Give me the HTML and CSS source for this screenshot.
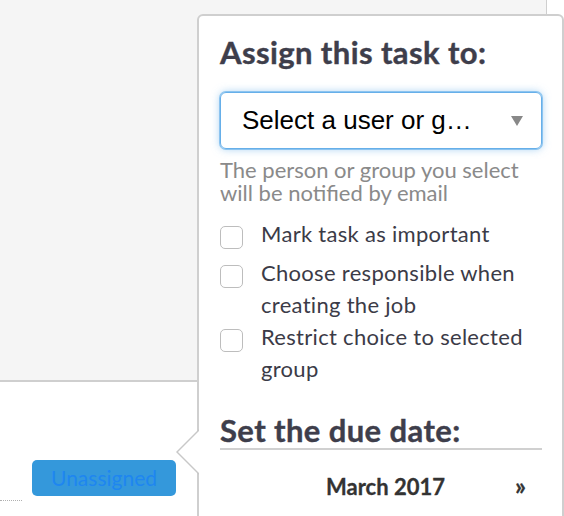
FILE: index.html
```html
<!DOCTYPE html>
<html>
<head>
<meta charset="utf-8">
<link rel="stylesheet" href="styles.css">
</head>
<body>
<div class="page">
  <div class="panel"></div>
  <div class="footer">
    <div class="dots"></div>
    <span class="badge">Unassigned</span>
  </div>

  <div class="popover">
    <div class="arrow"></div>
    <h2 class="title">Assign this task to:</h2>
    <div class="select">
      <span class="select-text">Select a user or g…</span>
      <span class="caret"></span>
    </div>
    <p class="help">The person or group you select will be notified by email</p>
    <label class="row row-first"><input type="checkbox" class="check"><span>Mark task as important</span></label>
    <label class="row"><input type="checkbox" class="check"><span>Choose responsible when creating the job</span></label>
    <label class="row"><input type="checkbox" class="check"><span>Restrict choice to selected group</span></label>
    <h2 class="title title-due">Set the due date:</h2>
    <div class="cal-head">
      <span class="prev"></span>
      <span class="month">March 2017</span>
      <span class="next">»</span>
    </div>
  </div>
</div>
</body>
</html>
```

FILE: styles.css
```css
html, body {
  margin: 0;
  padding: 0;
  background: #ffffff;
}

.page {
  position: relative;
  width: 564px;
  height: 516px;
  overflow: hidden;
  font-family: Lato, "Noto Sans", sans-serif;
}

.panel {
  width: 546px;
  height: 380px;
  background: #f5f5f5;
  border-right: 1px solid #cfcfcf;
  border-bottom: 2px solid #cfcfcf;
}

.footer {
  display: flex;
  align-items: flex-start;
  padding-top: 78px;
}

.dots {
  width: 22px;
  height: 0;
  margin-top: 40px;
  border-bottom: 1px dotted #b0b0b0;
}

.badge {
  margin-left: 10px;
  width: 125px;
  height: 36px;
  padding-left: 19px;
  box-sizing: content-box;
  background: #3498db;
  color: #1e86f0;
  border-radius: 5px;
  font-size: 21px;
  line-height: 35px;
}

.popover {
  position: absolute;
  left: 197px;
  top: 14px;
  width: 322px;
  height: 560px;
  padding: 18px 20px 0 21px;
  background: #ffffff;
  border: 2px solid #cfcfcf;
  border-radius: 6px;
}

.arrow {
  position: absolute;
  left: -23px;
  top: 413px;
  width: 0;
  height: 0;
  border-top: 23px solid transparent;
  border-bottom: 23px solid transparent;
  border-right: 23px solid #c8c8c8;
}

.arrow::after {
  content: "";
  position: absolute;
  left: 1.5px;
  top: -22px;
  width: 0;
  height: 0;
  border-top: 22px solid transparent;
  border-bottom: 22px solid transparent;
  border-right: 22px solid #ffffff;
}

.title {
  margin: 0;
  font-size: 31px;
  line-height: 36px;
  letter-spacing: 0.4px;
  font-weight: 700;
  color: #3e3e4b;
  -webkit-text-stroke: 0.4px #3e3e4b;
}

.select {
  margin-top: 22px;
  height: 55px;
  display: flex;
  align-items: center;
  justify-content: space-between;
  padding: 0 18px 0 21px;
  border: 1px solid #66afe9;
  border-radius: 6px;
  box-shadow: 0 0 0 1px #8cc4f0, 0 0 8px rgba(102, 175, 233, 0.6);
}

.select-text {
  font-family: "Liberation Sans", Arial, sans-serif;
  font-size: 26px;
  color: #000000;
}

.caret {
  width: 0;
  height: 0;
  border-left: 6px solid transparent;
  border-right: 6px solid transparent;
  border-top: 10px solid #888888;
}

.help {
  margin: 9px 0 0 0;
  font-size: 22px;
  line-height: 23px;
  color: #8a8a8a;
}

.row {
  display: flex;
  align-items: flex-start;
  font-size: 22px;
  line-height: 32px;
  letter-spacing: 0.3px;
  color: #3b3b47;
}

.row-first {
  margin-top: 14px;
  margin-bottom: 7px;
}

.check {
  appearance: none;
  -webkit-appearance: none;
  flex: none;
  width: 23px;
  height: 23px;
  margin: 8px 18px 0 0;
  border: 1.5px solid #bdbdbd;
  border-radius: 5px;
  background: #ffffff;
  box-sizing: border-box;
}

.title-due {
  margin-top: 27px;
  padding-bottom: 0;
  border-bottom: 2px solid #d0d0d0;
}

.cal-head {
  display: flex;
  align-items: baseline;
  margin-top: 21px;
  font-size: 22px;
  font-weight: 700;
  color: #333333;
  -webkit-text-stroke: 0.3px #333333;
}

.prev {
  width: 106px;
}

.month {
  flex: 1;
}

.next {
  width: 27px;
  font-size: 24px;
}
```
